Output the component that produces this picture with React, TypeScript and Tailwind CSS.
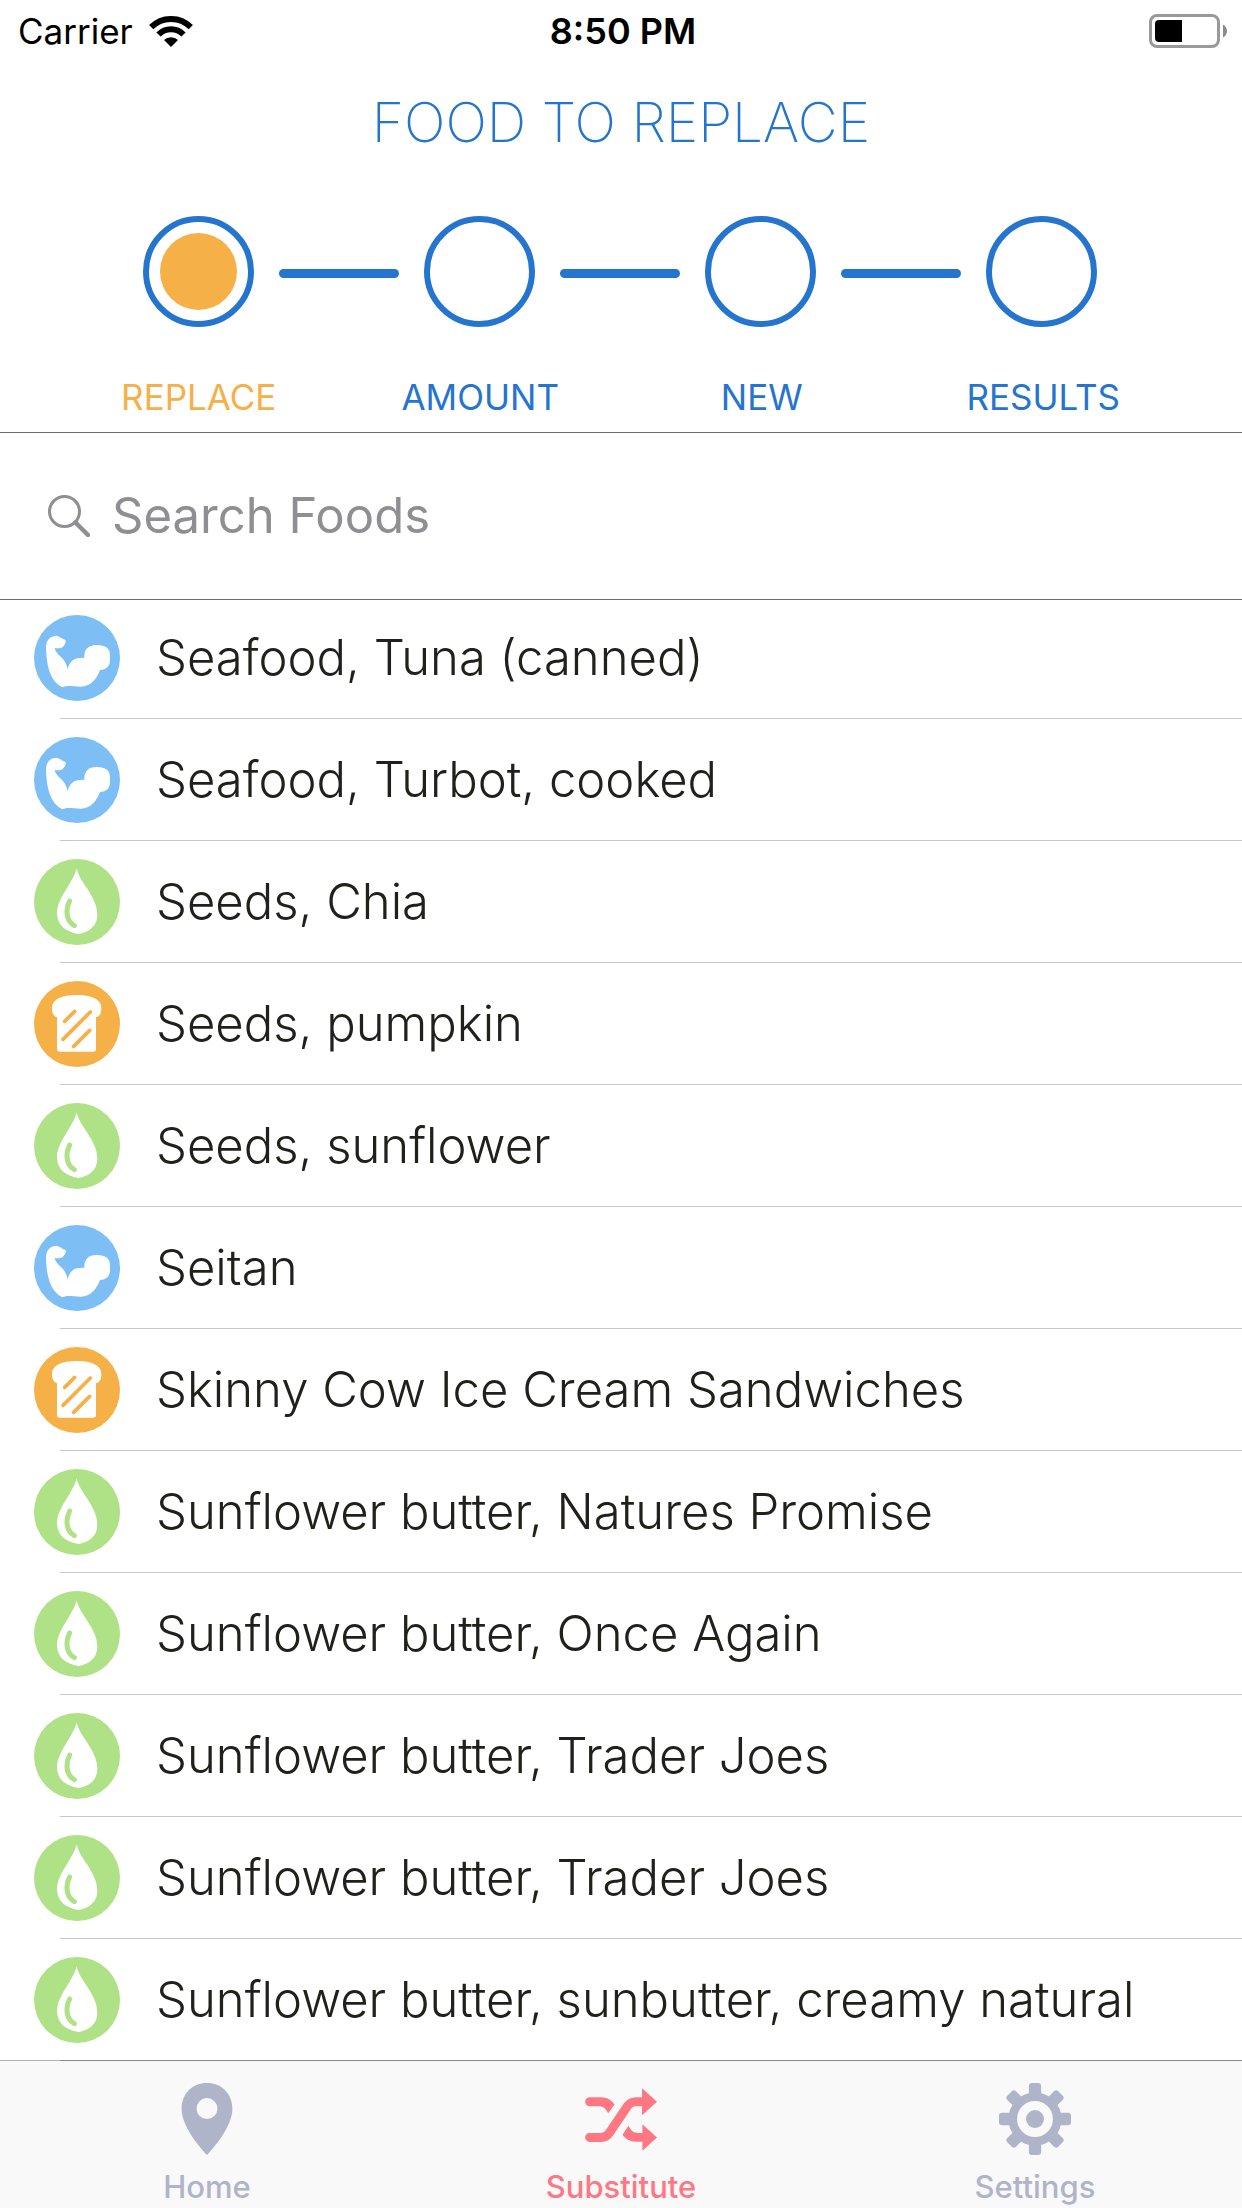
import React from "react";

type Kind = "protein" | "fat" | "carb";

const FOODS: { name: string; kind: Kind }[] = [
  { name: "Seafood, Tuna (canned)", kind: "protein" },
  { name: "Seafood, Turbot, cooked", kind: "protein" },
  { name: "Seeds, Chia", kind: "fat" },
  { name: "Seeds, pumpkin", kind: "carb" },
  { name: "Seeds, sunflower", kind: "fat" },
  { name: "Seitan", kind: "protein" },
  { name: "Skinny Cow Ice Cream Sandwiches", kind: "carb" },
  { name: "Sunflower butter, Natures Promise", kind: "fat" },
  { name: "Sunflower butter, Once Again", kind: "fat" },
  { name: "Sunflower butter, Trader Joes", kind: "fat" },
  { name: "Sunflower butter, Trader Joes", kind: "fat" },
  { name: "Sunflower butter, sunbutter, creamy natural", kind: "fat" },
];

const STEPS = ["REPLACE", "AMOUNT", "NEW", "RESULTS"];

function ProteinIcon() {
  return (
    <svg viewBox="42 45 258 258" className="size-[86px] shrink-0" aria-hidden="true">
      <circle cx="171" cy="174" r="129" fill="#7dbff4" />
      <path
        fill="#fff"
        d="M110 107C118 109 125 115 135 119Q139 122 137 127C134 135 129 143 122 144Q113 146 104 144C106 156 115 163 124 172C134 182 140 192 143 208C148 190 156 174 181 174Q187 173 193 174C192 150 203 135 230 135C257 135 270 146 270 165V180C270 199 259 209 240 210C232 230 217 260 181 260C160 260 143 254 127 262C92 244 79 202 78 140C79 120 90 108 110 107Z"
      />
    </svg>
  );
}

function FatIcon() {
  return (
    <svg viewBox="42 54 258 258" className="size-[86px] shrink-0" aria-hidden="true">
      <circle cx="171" cy="183" r="129" fill="#afe186" />
      <path
        fill="#fff"
        d="M170 82C178 125 232 165 232 222C232 257 204 275 175 279C138 271 112 256 111 216C112 170 160 125 170 82Z"
      />
      <path d="M149 180C137 204 136 238 163 254" fill="none" stroke="#afe186" strokeWidth="15" strokeLinecap="round" />
    </svg>
  );
}

function CarbIcon() {
  return (
    <svg viewBox="42 421 258 258" className="size-[86px] shrink-0" aria-hidden="true">
      <circle cx="171" cy="550" r="129" fill="#f6b048" />
      <path
        fill="#fff"
        d="M111 530C99 525 96 515 96 502C96 475 125 463 170 463C215 463 244 475 244 502C244 517 240 527 228 530V626Q228 633 221 633H118Q111 633 111 626Z"
      />
      <path
        d="M134 542L164 512M129 596L211 514M161 617L209 569"
        fill="none"
        stroke="#f6b048"
        strokeWidth="11"
        strokeLinecap="round"
      />
    </svg>
  );
}

function FoodIcon({ kind }: { kind: Kind }) {
  if (kind === "protein") return <ProteinIcon />;
  if (kind === "fat") return <FatIcon />;
  return <CarbIcon />;
}

function WifiIcon() {
  return (
    <svg viewBox="0 0 44 31" className="h-[31px] w-11" aria-hidden="true">
      <path d="M2.2 11.2A28 28 0 0 1 41.8 11.2" fill="none" stroke="#000" strokeWidth="6" />
      <path d="M9.5 18.5A17.7 17.7 0 0 1 34.5 18.5" fill="none" stroke="#000" strokeWidth="6" />
      <path d="M22 31L15 24A10 10 0 0 1 29 24Z" />
    </svg>
  );
}

function BatteryIcon() {
  return (
    <svg viewBox="0 0 79 34" className="h-[34px] w-[79px]" aria-hidden="true">
      <rect x="1.5" y="1.5" width="68" height="31" rx="6.5" fill="none" stroke="#999" strokeWidth="3" />
      <path d="M10 6H33V28H10Q6 28 6 24V10Q6 6 10 6Z" />
      <path d="M74 10.500Q78 13 78 17T74 23.500Z" fill="#8c8c8c" />
    </svg>
  );
}

function HomeIcon() {
  return (
    <svg viewBox="511 159 217 217" className="size-[72px]" fill="currentColor" aria-hidden="true">
      <path
        fillRule="evenodd"
        d="M619.5 376C588 342 543 284 543 237C543 190 577 159 619.500 159S696 190 696 237C696 284 651 342 619.500 376ZM619.500 204.500A31.500 31.500 0 1 0 619.500 267.500A31.500 31.500 0 1 0 619.500 204.500Z"
      />
    </svg>
  );
}

function SubstituteIcon() {
  return (
    <svg viewBox="252 126 217 217" className="size-[72px]" fill="currentColor" aria-hidden="true">
      <path d="M266 169H300C320 169 333 179 341 191L322 217C314 203 308 196 294 196H266A13.500 13.500 0 0 1 266 169Z" />
      <path
        d="M266 290H300C312 290 318 287 325 277L374 204C384 189 390 182.500 405 182.500H426"
        fill="none"
        stroke="currentColor"
        strokeWidth="27"
        strokeLinecap="round"
      />
      <path d="M424 142L469 182.500L424 223Z" />
      <path d="M383 255C391 270 398 276 412 277H425V250L469 290L425 330V303H406C386 303 374 294 365 282Z" />
    </svg>
  );
}

function SettingsIcon() {
  return (
    <svg viewBox="179 126 217 217" className="size-[72px]" fill="currentColor" aria-hidden="true">
      <circle cx="287.500" cy="234.500" r="67" fill="none" stroke="currentColor" strokeWidth="26" />
      <circle cx="287.500" cy="234.500" r="27" />
      {[0, 45, 90, 135, 180, 225, 270, 315].map((angle) => (
        <rect key={angle} x="269" y="126" width="37" height="44" rx="9" transform={`rotate(${angle} 287.5 234.5)`} />
      ))}
    </svg>
  );
}

const TABS = [
  { name: "Home", Icon: HomeIcon, color: "text-[#afb4c8]" },
  { name: "Substitute", Icon: SubstituteIcon, color: "text-[#fe7783]" },
  { name: "Settings", Icon: SettingsIcon, color: "text-[#afb4c8]" },
];

function StatusBar() {
  return (
    <div className="grid h-[62px] grid-cols-3 items-center pr-[14px] pl-[18px] text-4xl text-black">
      <div className="flex items-center gap-4">
        <span className="text-[35px]">Carrier</span>
        <WifiIcon />
      </div>
      <span className="text-center font-semibold">8:50 PM</span>
      <div className="flex justify-end">
        <BatteryIcon />
      </div>
    </div>
  );
}

function Stepper() {
  return (
    <div className="mt-[60px] text-[#2575ce]">
      <div className="flex items-center pr-[145px] pl-[143px]">
        {STEPS.map((step, index) => (
          <React.Fragment key={step}>
            {index > 0 && (
              <div className="flex-1 px-[25px] pt-1">
                <div className="h-[9px] rounded-full bg-[#2575ce]" />
              </div>
            )}
            <div className="flex size-[111px] shrink-0 items-center justify-center rounded-full border-[6px] border-[#2575ce]">
              {index === 0 && <div className="size-[77px] rounded-full bg-[#f6b048]" />}
            </div>
          </React.Fragment>
        ))}
      </div>
      <ol className="mt-[46px] grid grid-cols-4 px-[58px] text-center text-[35px] leading-[48px]">
        {STEPS.map((step, index) => (
          <li
            key={step}
            aria-current={index === 0 ? "step" : undefined}
            className={index === 0 ? "text-[#f6b048]" : undefined}
          >
            {step}
          </li>
        ))}
      </ol>
    </div>
  );
}

export default function App() {
  return (
    <div className="flex min-h-screen flex-col bg-white font-['Inter','Liberation_Sans',sans-serif]">
      <StatusBar />
      <header>
        <h1 className="mt-[26px] text-center text-[55px] leading-[68px] font-extralight text-[#2575ce]">FOOD TO REPLACE</h1>
        <Stepper />
      </header>
      <label className="mt-[11px] flex h-[168px] items-center gap-[22px] border-y border-[#6d6d6f] px-12">
        <svg viewBox="0 0 42 42" className="size-[42px] shrink-0" fill="none" stroke="#8e8e93" aria-hidden="true">
          <circle cx="16.500" cy="16.500" r="15" strokeWidth="3" />
          <path d="M27.500 27.500L40 40" strokeWidth="4.500" strokeLinecap="round" />
        </svg>
        <input
          type="search"
          aria-label="Search Foods"
          placeholder="Search Foods"
          className="min-w-0 flex-1 bg-transparent text-[49px] leading-[60px] outline-none placeholder:text-[#8e8e93]"
        />
      </label>
      <main className="-mt-[3px] grow">
        <ul>
          {FOODS.map((food, index) => (
            <li key={index} className="flex flex-col">
              <button type="button" className="flex h-[121px] items-center gap-9 pl-[34px] text-left">
                <FoodIcon kind={food.kind} />
                <span className="text-[49px] leading-[60px] font-light text-[#21211b]">{food.name}</span>
              </button>
              <div className="ml-[60px] h-px bg-[#c8c7cc]" />
            </li>
          ))}
        </ul>
      </main>
      <nav className="-mt-px grid h-[148px] grid-cols-3 border-t border-black/30 bg-[#f9f9f9] bg-clip-padding">
        {TABS.map(({ name, Icon, color }) => (
          <a key={name} href={`#${name.toLowerCase()}`} className={`flex flex-col items-center pt-[22px] ${color}`}>
            <Icon />
            <span className="mt-3 text-[31px] leading-10 font-medium">{name}</span>
          </a>
        ))}
      </nav>
    </div>
  );
}
